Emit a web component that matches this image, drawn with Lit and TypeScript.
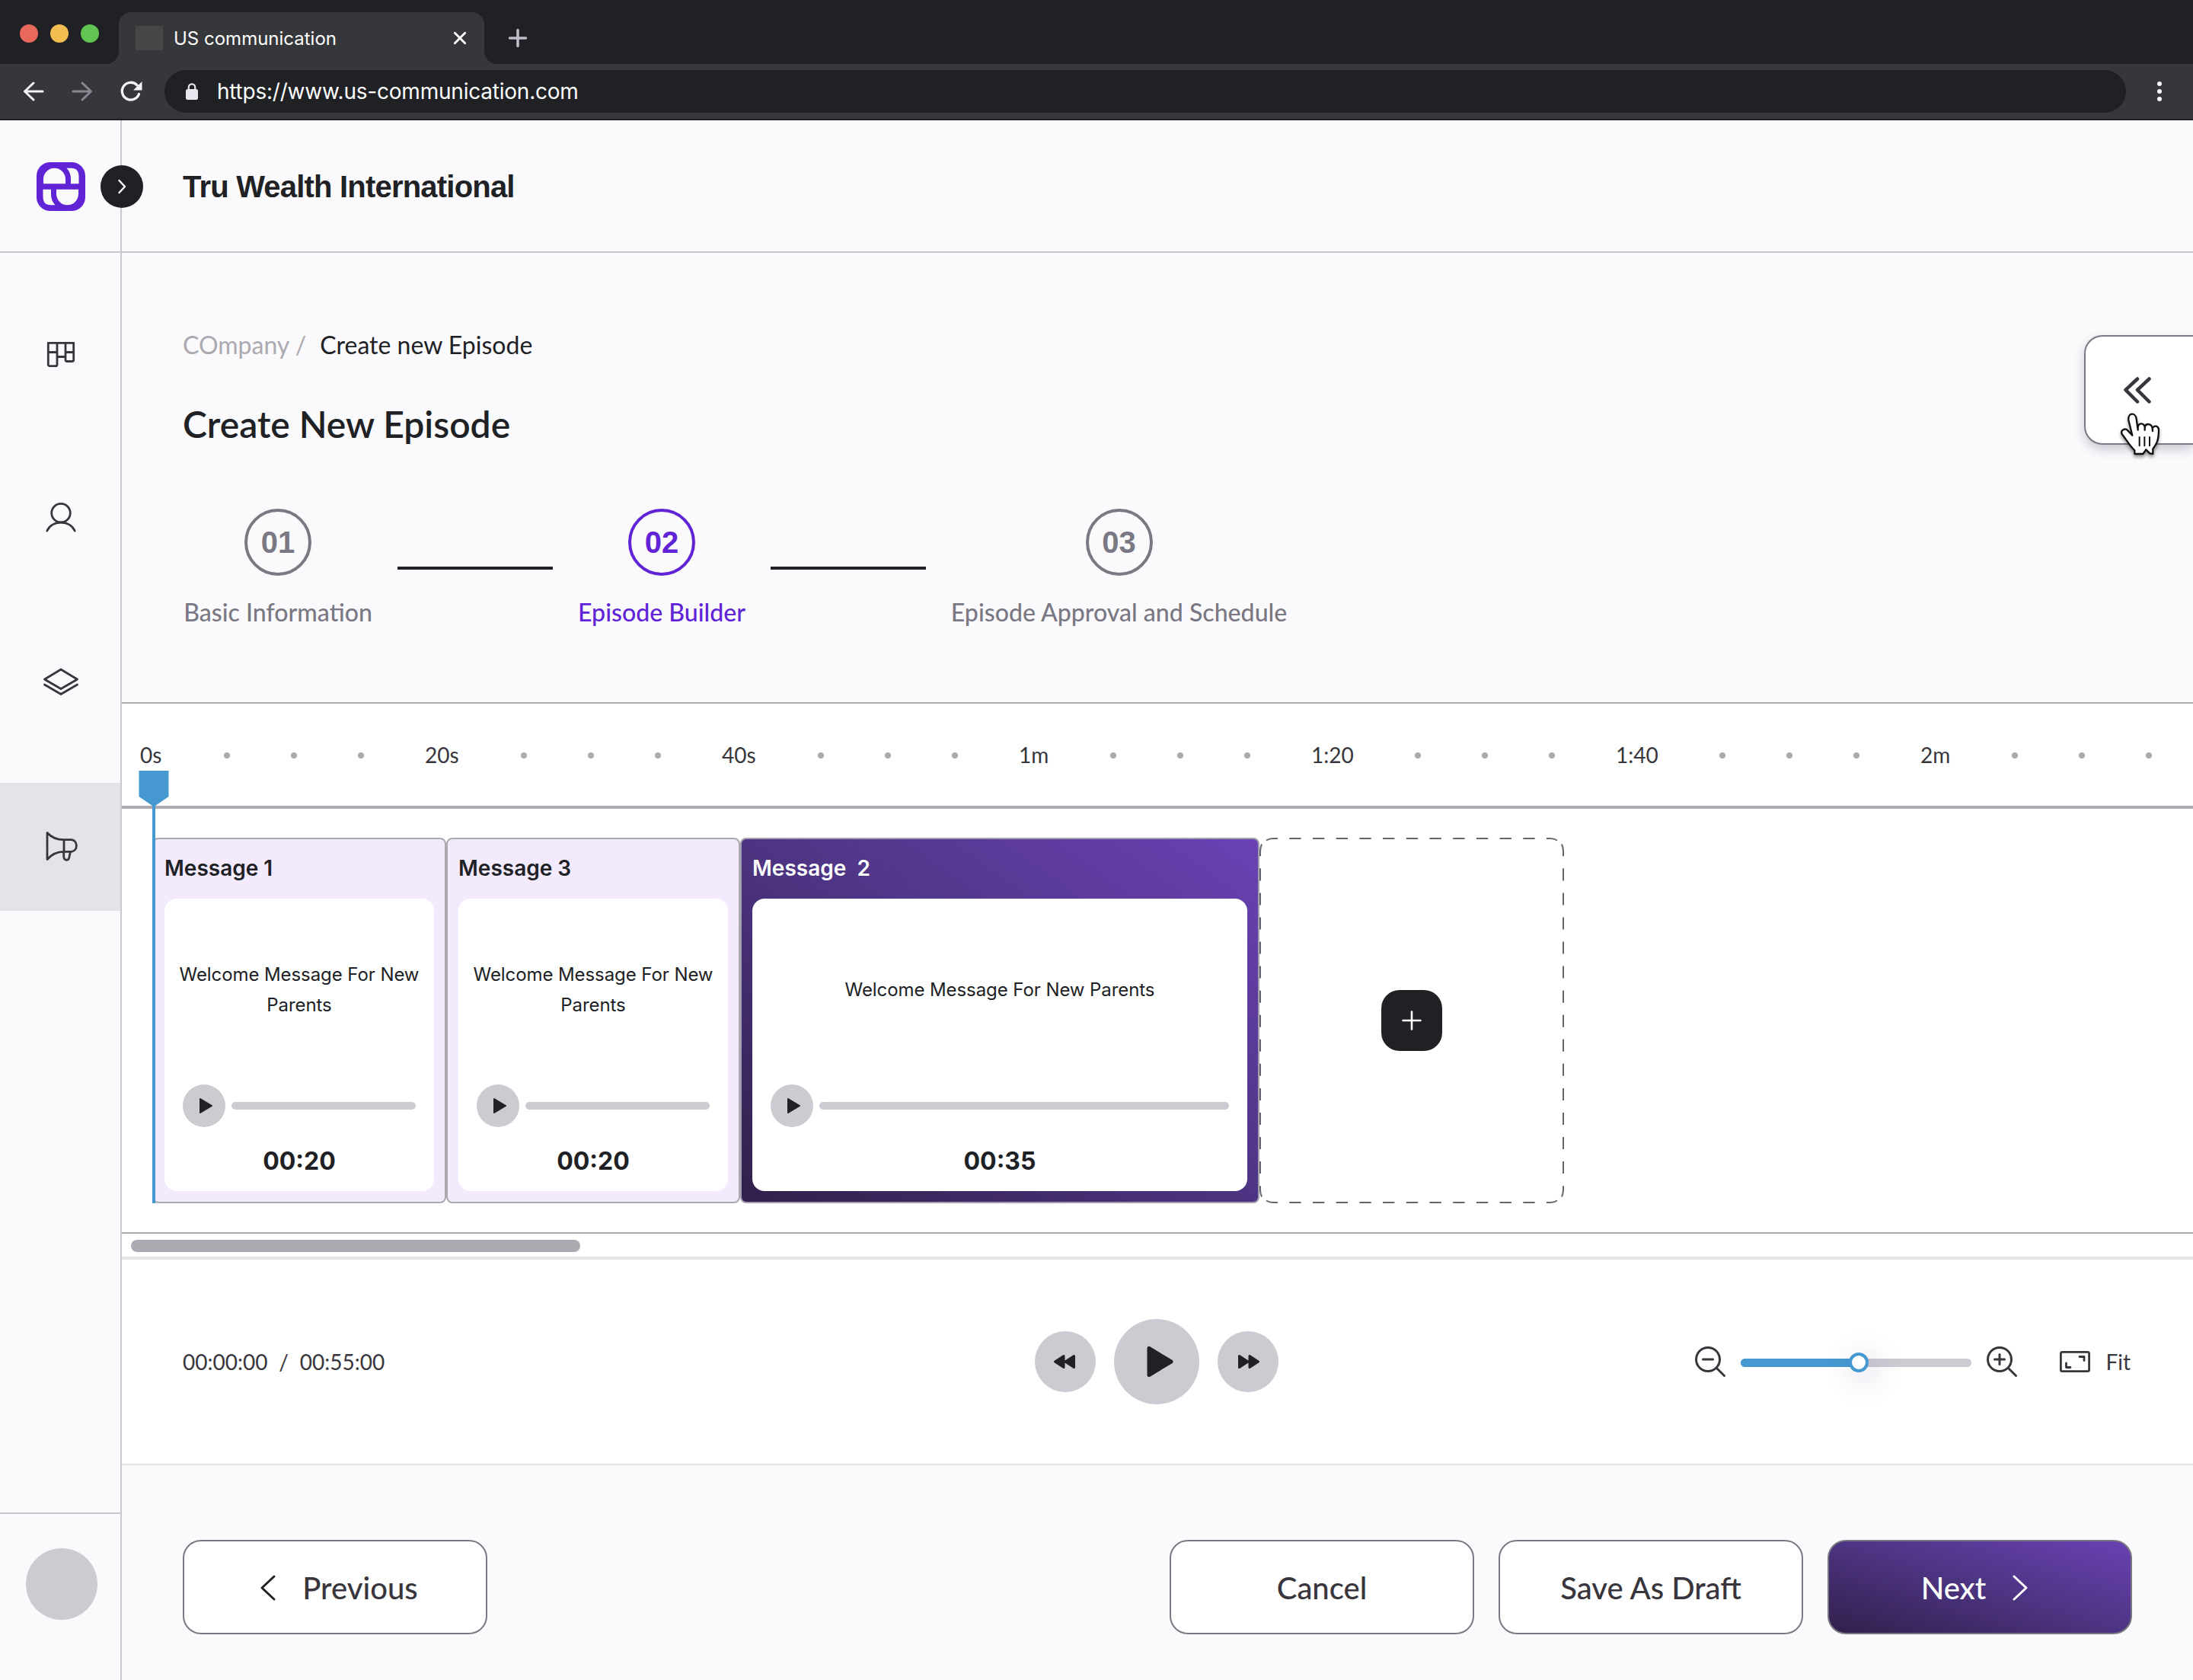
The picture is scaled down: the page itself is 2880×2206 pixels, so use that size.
import { LitElement, html, css, svg, nothing } from "lit";
import { customElement, property } from "lit/decorators.js";
import { classMap } from "lit/directives/class-map.js";

interface Clip {
  title: string;
  text: string;
  time: string;
  width: number;
  active?: boolean;
}

const clips: Clip[] = [
  { title: "Message 1", text: "Welcome Message For New Parents", time: "00:20", width: 386 },
  { title: "Message 3", text: "Welcome Message For New Parents", time: "00:20", width: 386 },
  { title: "Message  2", text: "Welcome Message For New Parents", time: "00:35", width: 682, active: true },
];

const ticks: [string, number][] = [
  ["0s", 30],
  ["20s", 46],
  ["40s", 46],
  ["1m", 40],
  ["1:20", 56],
  ["1:40", 56],
  ["2m", 40],
];

const navIcons = [
  svg`<path d="M3.3 6.3H36.7V28.5a2 2 0 0 1-2 2H28a2 2 0 0 1-2-2V6.3M15 6.3V34.7a2 2 0 0 1-2 2H5.3a2 2 0 0 1-2-2V6.3M3.3 18.5H15M26 18.5H36.7M15 24.5H26"/>`,
  svg`<circle cx="20" cy="13.6" r="12.3"/><path d="M1.8 37C5 30 12 26 20 26S35 30 38.2 37"/>`,
  svg`<path d="M20 3L41.5 16L20 28.5L-1.5 16ZM-1.5 23L20 35.5L41.5 23"/>`,
  svg`<path d="M2 1.5V36.500C8 29.500 14 26.300 23.500 26.300H34C42.500 25 42.500 12 34 10.700H23.500C15 10.700 8 8 2 1.500ZM24 10.700V26.300M23.700 26.300V32.500C24 38.500 30.500 39 31 33L32.500 26.300"/>`,
];

@customElement("clip-card")
class ClipCard extends LitElement {
  @property({ attribute: false }) clip!: Clip;

  static styles = css`
    :host { display: block; }
    .card {
      box-sizing: border-box; height: 480px; padding: 0 14px 14px;
      border: 2px solid #aca9b0; border-radius: 8px; background: #f3eafd; color: #202125;
    }
    .card.active {
      background: linear-gradient(to top right, #30204a, #4d3482 50%, #6a42b4) border-box;
      border-color: #a39db0; color: #fff;
    }
    .title { height: 78px; line-height: 77px; font-size: 28px; font-weight: 600; white-space: pre; }
    .body {
      box-sizing: border-box; height: 384px; padding: 0 24px 19px; background: #fff; color: #202125;
      border-radius: 16px; display: flex; flex-direction: column;
    }
    .text {
      height: 240px; margin: 0 -8px 4px; display: flex; align-items: center; justify-content: center;
      font-size: 24px; line-height: 40px; text-align: center; letter-spacing: -0.08px;
    }
    .player { display: flex; align-items: center; gap: 8px; margin-bottom: 25px; }
    .play { width: 56px; height: 56px; border-radius: 50%; background: #cdcad1; flex: none; }
    .track { flex: 1; height: 10px; border-radius: 5px; background: #cdcad1; }
    .time { line-height: 40px; font-size: 32px; font-weight: 700; text-align: center; }
  `;

  render() {
    const { title, text, time, active } = this.clip;
    return html`
      <div class=${classMap({ card: true, active: !!active })}>
        <div class="title">${title}</div>
        <div class="body">
          <div class="text">${text}</div>
          <div class="player">
            <svg class="play" viewBox="0 0 56 56">
              <path d="M23 19L38 28L23 37Z" fill="#202125" stroke="#202125" stroke-width="2" stroke-linejoin="round" />
            </svg>
            <div class="track"></div>
          </div>
          <div class="time">${time}</div>
        </div>
      </div>
    `;
  }
}

@customElement("app-root")
class AppRoot extends LitElement {
  static styles = css`
    :host {
      display: block; width: 2880px; height: 2206px; overflow: hidden;
      background: #fafafc; color: #202125; font-family: Inter, "Liberation Sans", sans-serif;
    }
    svg { display: block; flex: none; overflow: visible; }
    .line { fill: none; stroke-linecap: round; stroke-linejoin: round; }

    .tabs { height: 84px; background: #202125; display: flex; align-items: flex-end; }
    .lights { display: flex; gap: 16px; padding: 0 26px 28px 26px; }
    .light { width: 24px; height: 24px; border-radius: 50%; }
    .red { background: #e8695b; }
    .yellow { background: #f4bd4f; }
    .green { background: #61c453; }
    .tab {
      box-sizing: border-box; width: 480px; height: 68px; background: #36373b; border-radius: 16px 16px 0 0;
      display: flex; align-items: center; padding: 0 24px 0 22px; color: #fff; font-size: 24px; position: relative;
    }
    .tab::before, .tab::after { content: ""; position: absolute; bottom: 0; width: 16px; height: 16px; }
    .tab::before { left: -16px; background: radial-gradient(circle at 0 0, transparent 15.5px, #36373b 16px); }
    .tab::after { right: -16px; background: radial-gradient(circle at 100% 0, transparent 15.5px, #36373b 16px); }
    .favicon { width: 36px; height: 32px; background: #464646; margin-right: 14px; }
    .tab-name { flex: 1; }
    .new-tab { margin: 0 0 22px 32px; }
    .bar {
      box-sizing: border-box; height: 74px; background: #36373b; border-bottom: 2px solid #202125;
      display: flex; align-items: center; padding: 0 32px 0 30px;
    }
    .nav-btn { margin-right: 36px; }
    .reload { margin-right: 29px; }
    .url {
      flex: 1; height: 56px; border-radius: 28px; background: #202125; color: #fff; font-size: 28px;
      display: flex; align-items: center; padding-left: 27px; gap: 24px; margin-right: 32px; letter-spacing: -0.22px;
    }
    .menu { width: 24px; }

    .app { display: flex; height: 2048px; position: relative; }
    .side { width: 158px; border-right: 2px solid #cac9cf; display: flex; flex-direction: column; flex: none; }
    .brand {
      box-sizing: border-box; height: 174px; border-bottom: 2px solid #cac9cf; padding: 55px 0 0 48px;
      margin-right: -2px;
    }
    .nav { flex: 1; padding-top: 48px; display: flex; flex-direction: column; gap: 48px; }
    .item { height: 168px; display: flex; align-items: center; justify-content: center; padding-left: 2px; }
    .item.on { background: #e4e3e8; }
    .profile { box-sizing: border-box; height: 220px; border-top: 2px solid #cac9cf; padding: 45px 0 0 34px; }
    .avatar { width: 94px; height: 94px; border-radius: 50%; background: #cdcad1; }
    .toggle { position: absolute; left: 132px; top: 59px; }

    .main { flex: 1; min-width: 0; display: flex; flex-direction: column; }
    .head {
      box-sizing: border-box; height: 174px; border-bottom: 2px solid #cac9cf; padding: 2px 0 0 80px;
      display: flex; align-items: center; font: 700 40px/46px "Liberation Sans", sans-serif; letter-spacing: -0.8px;
    }
    .intro { box-sizing: border-box; height: 590px; padding: 101px 80px 0; font-family: Lato, sans-serif; }
    .crumbs { font-size: 32px; line-height: 40px; display: flex; gap: 18px; }
    .crumb-old { color: #aca9b0; }
    .page-title { margin: 54px 0 82px; font-size: 48px; line-height: 60px; font-weight: 600; height: 59px; }
    .steps { display: flex; gap: 32px; }
    .step { display: flex; flex-direction: column; align-items: center; gap: 28px; color: #7a7883; }
    .step.current { color: #6023d6; }
    .num {
      box-sizing: border-box; width: 88px; height: 88px; border: 4px solid currentColor; border-radius: 50%;
      display: flex; align-items: center; justify-content: center; font: 700 40px/46px "Liberation Sans", sans-serif;
    }
    .label { font-size: 32.1px; line-height: 40px; font-weight: 500; }
    .rule { width: 204px; height: 4px; margin-top: 76px; background: #202125; }

    .timeline { border-top: 2px solid #aca9b0; border-bottom: 2px solid #aca9b0; background: #fff; height: 694px; position: relative; }
    .ruler {
      height: 134px; border-bottom: 4px solid #aca9b0; padding-left: 24px; display: flex; align-items: center; gap: 80px;
      font-family: Lato, sans-serif; font-size: 28px; color: #38363c; overflow: hidden;
    }
    .tick { flex: none; white-space: nowrap; }
    .dot { width: 8px; height: 8px; border-radius: 50%; background: #aca9b0; flex: none; margin-top: 2px; }
    .clips { display: flex; padding: 38px 0 0 40px; }
    .add { width: 400px; height: 480px; position: relative; display: flex; align-items: center; justify-content: center; }
    .dashes { position: absolute; inset: 0; }
    .add-btn {
      width: 80px; height: 80px; border-radius: 24px; background: #202125;
      display: flex; align-items: center; justify-content: center;
    }
    .playhead { position: absolute; left: 22px; top: 88px; }

    .scroll { box-sizing: border-box; height: 34px; border-bottom: 4px solid #e4e3e8; background: #fff; padding: 8px 0 0 12px; }
    .thumb { width: 590px; height: 16px; border-radius: 8px; background: #aca9b0; }

    .controls {
      height: 268px; background: #fff; border-bottom: 2px solid #e4e3e8; padding: 0 81px 0 79px;
      display: grid; grid-template-columns: 1fr auto 1fr; align-items: center;
      font-family: Lato, sans-serif; font-size: 28px; color: #38363c;
    }
    .clock { white-space: pre; padding-left: 1px; word-spacing: 0.25px; }
    .buttons { display: flex; align-items: center; gap: 24px; }
    .round { background: #cdcad1; border-radius: 50%; fill: #202125; stroke: #202125; stroke-width: 3; stroke-linejoin: round; }
    .zoom { display: flex; align-items: center; justify-content: flex-end; }
    .slider { width: 303px; height: 11px; border-radius: 6px; background: #cdcad1; margin: 2px 20px 0; display: flex; align-items: center; }
    .fill { width: 155px; height: 11px; border-radius: 6px 0 0 6px; background: #4699d0; }
    .knob {
      box-sizing: border-box; width: 26px; height: 26px; border: 4px solid #4699d0; border-radius: 50%; background: #fff;
      margin-left: -13px; box-shadow: 6px 8px 36px 6px rgba(80, 80, 150, 0.16);
    }
    .fit-icon { margin: 0 20px 0 56px; }
    .fit { margin-right: 1px; }

    .foot { flex: 1; display: flex; align-items: flex-start; gap: 32px; padding: 98px 80px 0; font-family: Lato, sans-serif; }
    .btn {
      box-sizing: border-box; width: 400px; height: 124px; border: 2px solid #7a7883; border-radius: 24px; background: #fff;
      display: flex; align-items: center; justify-content: center; gap: 35px; color: #38363c;
      font-size: 40px; line-height: 48px; font-weight: 500; padding-top: 1px;
    }
    .btn.first { margin-right: auto; padding-left: 11px; }
    .btn.primary { color: #fff; padding-right: 14px; background: linear-gradient(to top right, #30204a, #4d3482 50%, #6a42b4) border-box; }

    .drawer {
      box-sizing: border-box; position: absolute; right: 0; top: 282px; width: 143px; height: 144px; background: #fff;
      border: 2px solid #7a7883; border-right: none; border-radius: 24px 0 0 24px;
      box-shadow: 0 6px 14px rgba(60, 50, 90, 0.25); padding: 53px 0 0 52px;
    }
    .cursor { position: absolute; left: 2783px; top: 382px; filter: drop-shadow(0 3px 2px rgba(0, 0, 0, 0.4)); }
  `;

  private browser() {
    return html`
      <div class="tabs">
        <div class="lights">
          <div class="light red"></div>
          <div class="light yellow"></div>
          <div class="light green"></div>
        </div>
        <div class="tab">
          <div class="favicon"></div>
          <div class="tab-name">US communication</div>
          <svg width="16" height="16"><path class="line" stroke="#fff" stroke-width="2.8" d="M1.3 1.3L14.7 14.7M14.7 1.3L1.3 14.7" /></svg>
        </div>
        <svg class="new-tab" width="24" height="24"><path class="line" stroke="#bfbdca" stroke-width="3.5" d="M12 1.5V22.5M1.5 12H22.5" /></svg>
      </div>
      <div class="bar">
        <svg class="nav-btn" width="28" height="28"><path class="line" stroke="#f4f3f8" stroke-width="3" d="M14 3L2.5 14L14 25M3 14H26" /></svg>
        <svg class="nav-btn" width="28" height="28"><path class="line" stroke="#8b8792" stroke-width="3" d="M14 3L25.5 14L14 25M25 14H2" /></svg>
        <svg class="reload" width="29" height="28">
          <path class="line" stroke="#f4f3f8" stroke-width="3.3" d="M24.5 17.5A11.4 11.4 0 1 1 22 5.8" />
          <path fill="#f4f3f8" d="M28.5 1V12.5H17Z" />
        </svg>
        <div class="url">
          <svg width="18" height="22">
            <rect x="1" y="8" width="16" height="14" rx="2.5" fill="#e8e6ee" />
            <path class="line" stroke="#e8e6ee" stroke-width="2.2" d="M4.8 9V5.5A4.2 4.2 0 0 1 13.2 5.5V9" />
          </svg>
          <span>https://www.us-communication.com</span>
        </div>
        <svg class="menu" width="24" height="28" fill="#f4f3f8"><circle cx="12" cy="4" r="3" /><circle cx="12" cy="14" r="3" /><circle cx="12" cy="24" r="3" /></svg>
      </div>
    `;
  }

  private sidebar() {
    const half = "M9 28.3V22.5a14.5 14.8 0 0 1 29 0V28.3ZM39.5 7.7Q45 13.5 45 22V28.3H55.5V19Q55.5 7.7 45.5 7.7Z";
    return html`
      <div class="side">
        <div class="brand">
          <svg width="64" height="64">
            <rect width="64" height="64" rx="18" fill="#6023d6" />
            <path fill="#fafafc" d=${half} />
            <path fill="#fafafc" d=${half} transform="rotate(180 32 32)" />
          </svg>
        </div>
        <div class="nav">
          ${navIcons.map(
            (icon, i) => html`<div class=${classMap({ item: true, on: i === 3 })}>
              <svg class="line" width="40" height="40" stroke="#38363c" stroke-width="2.8">${icon}</svg>
            </div>`,
          )}
        </div>
        <div class="profile"><div class="avatar"></div></div>
      </div>
    `;
  }

  private timeline() {
    return html`
      <div class="timeline">
        <div class="ruler">
          ${ticks.map(
            ([label, width]) => html`<span class="tick" style="width:${width}px">${label}</span
              ><i class="dot"></i><i class="dot"></i><i class="dot"></i>`,
          )}
        </div>
        <div class="clips">
          ${clips.map((c) => html`<clip-card .clip=${c} style="width:${c.width}px"></clip-card>`)}
          <div class="add">
            <svg class="dashes" width="400" height="480" fill="none" stroke="#66646d" stroke-width="2">
              <path stroke-dasharray="15.35 15.35" d="M9 3.5Q13 1 18 1H382Q387 1 391 3.5M9 476.5Q13 479 18 479H382Q387 479 391 476.5" />
              <path stroke-dasharray="16.03 16.03" d="M3 8.500Q1 13 1 18V462Q1 467 3 471.500M397 8.500Q399 13 399 18V462Q399 467 397 471.500" />
            </svg>
            <div class="add-btn">
              <svg width="26" height="26"><path class="line" stroke="#fff" stroke-width="2.6" d="M13 1.5V24.5M1.5 13H24.5" /></svg>
            </div>
          </div>
        </div>
        <svg class="playhead" width="40" height="568" fill="#4699d0">
          <path d="M0.5 0H39.5V34L22 46V568H18V46L0.5 34Z" />
        </svg>
      </div>
      <div class="scroll"><div class="thumb"></div></div>
    `;
  }

  private controls() {
    const lens = (plus: boolean) => html`<svg width="40" height="40">
      <g class="line" stroke="#38363c" stroke-width="3">
        <circle cx="17" cy="17" r="15.5" /><path d="M28.5 28.5L38.5 38.5M10.5 17H23.5" />
        ${plus ? svg`<path d="M17 10.5V23.5"/>` : nothing}
      </g>
    </svg>`;
    return html`
      <div class="controls">
        <div class="clock">00:00:00  /  00:55:00</div>
        <div class="buttons">
          <svg class="round" width="80" height="80"><path d="M38 32.5V47.5L26.5 40ZM51.5 32.5V47.5L40 40Z" /></svg>
          <svg class="round" width="112" height="112"><path d="M46 38.5V73.5L75 56Z" stroke-width="5" /></svg>
          <svg class="round" width="80" height="80"><path d="M28.5 32.5V47.5L40 40ZM42 32.5V47.5L53.5 40Z" /></svg>
        </div>
        <div class="zoom">
          ${lens(false)}
          <div class="slider"><div class="fill"></div><div class="knob"></div></div>
          ${lens(true)}
          <svg class="fit-icon" width="40" height="28"><path class="line" stroke="#38363c" stroke-width="2.8" d="M3 1.4H37A1.6 1.6 0 0 1 38.6 3V25A1.6 1.6 0 0 1 37 26.6H3A1.6 1.6 0 0 1 1.4 25V3A1.6 1.6 0 0 1 3 1.4ZM26 7.5H32V12.5M8.5 16V21.5H14" /></svg>
          <span class="fit">Fit</span>
        </div>
      </div>
    `;
  }

  render() {
    return html`
      ${this.browser()}
      <div class="app">
        ${this.sidebar()}
        <div class="main">
          <div class="head">Tru Wealth International</div>
          <div class="intro">
            <div class="crumbs"><span class="crumb-old">COmpany /</span><span>Create new Episode</span></div>
            <div class="page-title">Create New Episode</div>
            <div class="steps">
              <div class="step" style="width:250px"><div class="num">01</div><div class="label">Basic Information</div></div>
              <div class="rule"></div>
              <div class="step current" style="width:222px"><div class="num">02</div><div class="label">Episode Builder</div></div>
              <div class="rule"></div>
              <div class="step" style="width:443px"><div class="num">03</div><div class="label">Episode Approval and Schedule</div></div>
            </div>
          </div>
          ${this.timeline()} ${this.controls()}
          <div class="foot">
            <div class="btn first">
              <svg width="20" height="34"><path class="line" stroke="#202125" stroke-width="3" d="M18 2L2 17L18 32" /></svg>Previous
            </div>
            <div class="btn">Cancel</div>
            <div class="btn">Save As Draft</div>
            <div class="btn primary">
              Next<svg width="20" height="34"><path class="line" stroke="#fff" stroke-width="3" d="M2 2L18 17L2 32" /></svg>
            </div>
          </div>
        </div>
        <svg class="toggle" width="56" height="56">
          <circle cx="28" cy="28" r="28" fill="#202125" />
          <path class="line" stroke="#fff" stroke-width="2.4" d="M24.5 20L32 28L24.5 36" />
        </svg>
        <div class="drawer">
          <svg width="36" height="36"><path class="line" stroke="#38363c" stroke-width="4.5" d="M16 2.5L0.5 17L16 32.5M31.5 2.5L16 17L31.5 32.5" /></svg>
        </div>
        <svg class="cursor" width="57" height="64" viewBox="670 420 171 192">
          <path fill="#fff" stroke="#111114" stroke-width="7" stroke-linejoin="round" stroke-linecap="round"
            d="M722 515L707 455C704 425 734 423 738 450L744 494V482C748 464 768 466 771 482V494V482C776 466 797 468 801 486L802 498L801 488C808 473 824 478 826 492C826 535 818 548 803 568L803 588L791 586L776 571L764 588H731V574C712 556 697 530 681 510C674 494 694 484 704 496Z" />
          <path fill="none" stroke="#111114" stroke-width="6" stroke-linecap="round" d="M750 522V556M770 522V556M790 522V556" />
        </svg>
      </div>
    `;
  }
}
